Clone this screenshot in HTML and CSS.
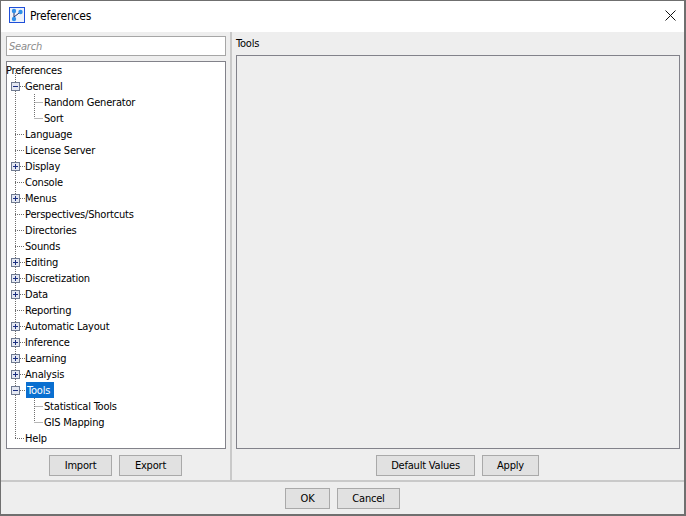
FILE: index.html
```html
<!DOCTYPE html>
<html lang="en">
<head>
<meta charset="utf-8">
<title>Preferences</title>
<link rel="stylesheet" href="styles.css">
</head>
<body>
<div class="window">
  <header class="titlebar">
    <svg class="app-icon" width="16" height="16" viewBox="0 0 16 16">
      <rect x="0.5" y="0.5" width="15" height="15" fill="#eef3fb" stroke="#1f4fd8"/>
      <path d="M5 4 L5 12 M5 10 L12 4.5" stroke="#1c2f6b" stroke-width="1" fill="none"/>
      <circle cx="5" cy="4" r="2.2" fill="#2f8fe8"/>
      <circle cx="5" cy="12" r="2.2" fill="#2f8fe8"/>
      <circle cx="11.5" cy="5" r="2.2" fill="#2f8fe8"/>
    </svg>
    <span class="title">Preferences</span>
    <svg class="close" width="11" height="11" viewBox="0 0 11 11">
      <path d="M0.5 0.5 L10.5 10.5 M10.5 0.5 L0.5 10.5" stroke="#111" stroke-width="1" fill="none"/>
    </svg>
  </header>
  <div class="content">
    <aside class="left">
      <div class="search">Search</div>
      <div class="tree">
        <svg class="guides" width="60" height="386" viewBox="1 1 60 386">
          <g class="dots">
            <path d="M9.5 12 V377"/>
            <path d="M28.5 33 V57 M28.5 41.5 H37 M28.5 57.5 H37"/>
            <path d="M28.5 337 V361 M28.5 345.5 H37 M28.5 361.5 H37"/>
            <path d="M14 25.5 H19 M9 73.5 H19 M9 89.5 H19 M14 105.5 H19 M9 121.5 H19 M14 137.5 H19 M9 153.5 H19 M9 169.5 H19 M9 185.5 H19 M14 201.5 H19 M14 217.5 H19 M14 233.5 H19 M9 249.5 H19 M14 265.5 H19 M14 281.5 H19 M14 297.5 H19 M14 313.5 H19 M14 329.5 H19 M9 377.5 H19"/>
          </g>
          <g class="box">
            <rect x="5.5" y="21.5" width="8" height="8"/>
            <rect x="5.5" y="101.5" width="8" height="8"/>
            <rect x="5.5" y="133.5" width="8" height="8"/>
            <rect x="5.5" y="197.5" width="8" height="8"/>
            <rect x="5.5" y="213.5" width="8" height="8"/>
            <rect x="5.5" y="229.5" width="8" height="8"/>
            <rect x="5.5" y="261.5" width="8" height="8"/>
            <rect x="5.5" y="277.5" width="8" height="8"/>
            <rect x="5.5" y="293.5" width="8" height="8"/>
            <rect x="5.5" y="309.5" width="8" height="8"/>
            <rect x="5.5" y="325.5" width="8" height="8"/>
          </g>
          <path class="sign" d="M7 25.5 H12 M7 105.5 H12 M9.5 103 V108 M7 137.5 H12 M9.5 135 V140 M7 201.5 H12 M9.5 199 V204 M7 217.5 H12 M9.5 215 V220 M7 233.5 H12 M9.5 231 V236 M7 265.5 H12 M9.5 263 V268 M7 281.5 H12 M9.5 279 V284 M7 297.5 H12 M9.5 295 V300 M7 313.5 H12 M9.5 311 V316 M7 329.5 H12"/>
        </svg>
        <div class="node root">Preferences</div>
        <div class="node l1">General</div>
        <div class="node l2">Random Generator</div>
        <div class="node l2">Sort</div>
        <div class="node l1">Language</div>
        <div class="node l1">License Server</div>
        <div class="node l1">Display</div>
        <div class="node l1">Console</div>
        <div class="node l1">Menus</div>
        <div class="node l1">Perspectives/Shortcuts</div>
        <div class="node l1">Directories</div>
        <div class="node l1">Sounds</div>
        <div class="node l1">Editing</div>
        <div class="node l1">Discretization</div>
        <div class="node l1">Data</div>
        <div class="node l1">Reporting</div>
        <div class="node l1">Automatic Layout</div>
        <div class="node l1">Inference</div>
        <div class="node l1">Learning</div>
        <div class="node l1">Analysis</div>
        <div class="node l1"><span class="selected">Tools</span></div>
        <div class="node l2">Statistical Tools</div>
        <div class="node l2">GIS Mapping</div>
        <div class="node l1">Help</div>
      </div>
      <div class="actions">
        <button class="btn w-import">Import</button>
        <button class="btn w-import">Export</button>
      </div>
    </aside>
    <main class="right">
      <div class="heading">Tools</div>
      <div class="panel"></div>
      <div class="actions">
        <button class="btn w-default">Default Values</button>
        <button class="btn w-apply">Apply</button>
      </div>
    </main>
  </div>
  <footer class="footer">
    <button class="btn w-ok">OK</button>
    <button class="btn w-import">Cancel</button>
  </footer>
</div>
</body>
</html>
```
FILE: styles.css
```css
* { box-sizing: border-box; }
html, body { margin: 0; padding: 0; }
body {
  width: 686px;
  height: 516px;
  font-family: "DejaVu Sans Condensed", "DejaVu Sans", sans-serif;
  font-stretch: condensed;
  font-size: 11px;
  letter-spacing: -0.2px;
  color: #000;
  overflow: hidden;
}
.window {
  width: 686px;
  height: 516px;
  display: flex;
  flex-direction: column;
  border-top: 1px solid #6f6f6f;
  border-left: 1px solid #6f6f6f;
  border-right: 2px solid #6f6f6f;
  border-bottom: 2px solid #6f6f6f;
  background: #eeeeee;
}
.titlebar {
  height: 31px;
  flex: none;
  background: #fff;
  display: flex;
  align-items: center;
  padding: 0 8px 3px 8px;
}
.app-icon { flex: none; }
.title { margin-left: 5px; padding-top: 2px; font-size: 12px; color: #000; }
.close { margin-left: auto; margin-top: 1px; }
.content {
  flex: 1;
  display: flex;
  min-height: 0;
  border-bottom: 2px solid #c9c9c9;
}
.left {
  width: 231px;
  flex: none;
  padding: 4px 4px 5px 5px;
  display: flex;
  flex-direction: column;
  border-right: 2px solid #c9c9c9;
}
.search {
  height: 20px;
  flex: none;
  border: 1px solid #a6a6a6;
  background: #fff;
  color: #8c8c8c;
  font-style: italic;
  line-height: 20px;
  padding-left: 2px;
}
.tree {
  position: relative;
  height: 388px;
  flex: none;
  margin-top: 5px;
  border: 1px solid #82828a;
  background: #fff;
}
.guides { position: absolute; left: 0; top: 0; }
.dots path { stroke: #6e6e6e; stroke-width: 1; stroke-dasharray: 1 1; fill: none; }
.box rect { fill: #e4e8f2; stroke: #6f7a90; stroke-width: 1; }
.sign { stroke: #1b2f80; stroke-width: 1; fill: none; }
.node {
  position: relative;
  height: 16px;
  line-height: 18px;
  white-space: nowrap;
}
.root { margin-left: -1px; }
.l1 { padding-left: 18px; }
.l2 { padding-left: 37px; }
.selected {
  display: block;
  width: 28px;
  height: 16px;
  background: #0a6fd0;
  color: #fff;
  padding-left: 1px;
  margin-left: 1px;
}
.actions {
  flex: 1;
  display: flex;
  justify-content: center;
  align-items: flex-start;
  gap: 7px;
  padding: 6px 1px 0 0;
}
.btn {
  height: 21px;
  padding: 0;
  border: 1px solid #a9a9a9;
  background: #e1e1e1;
  color: #000;
  font: inherit;
  letter-spacing: inherit;
  line-height: 19px;
}
.w-import { width: 63px; }
.w-ok { width: 45px; }
.w-default { width: 99px; }
.w-apply { width: 57px; }
.right {
  flex: 1;
  display: flex;
  flex-direction: column;
  padding: 0 4px 5px 4px;
  min-width: 0;
}
.heading { height: 23px; line-height: 24px; flex: none; }
.panel {
  height: 394px;
  flex: none;
  border: 1px solid #82828a;
}
.footer {
  height: 32px;
  flex: none;
  display: flex;
  justify-content: center;
  align-items: center;
  gap: 7px;
}
```
